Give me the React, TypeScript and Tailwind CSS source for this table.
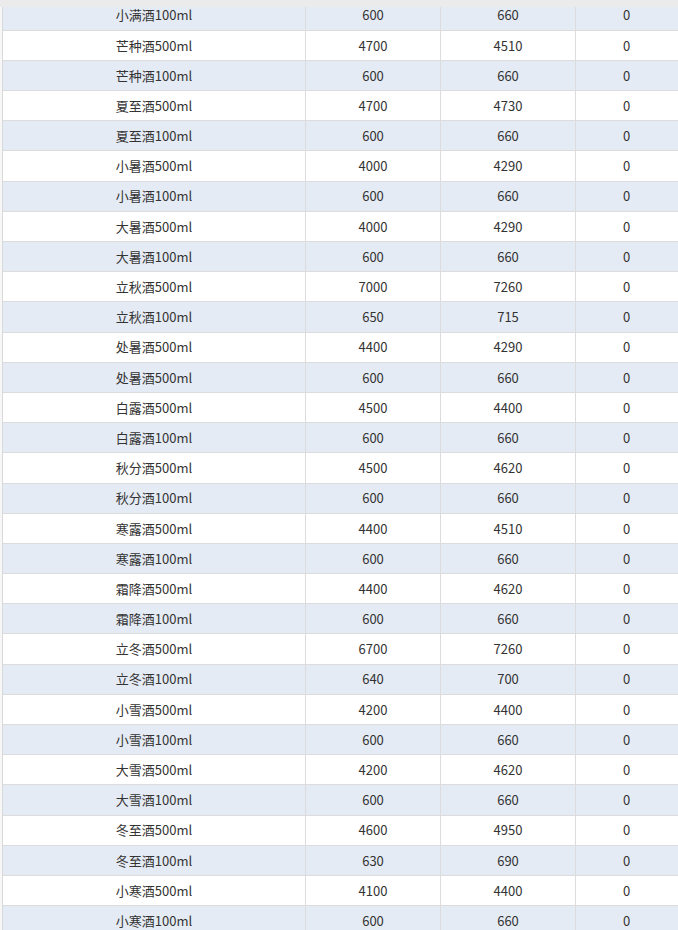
const rows: [string, string, string, string][] = [
  ["小满酒100ml", "600", "660", "0"],
  ["芒种酒500ml", "4700", "4510", "0"],
  ["芒种酒100ml", "600", "660", "0"],
  ["夏至酒500ml", "4700", "4730", "0"],
  ["夏至酒100ml", "600", "660", "0"],
  ["小暑酒500ml", "4000", "4290", "0"],
  ["小暑酒100ml", "600", "660", "0"],
  ["大暑酒500ml", "4000", "4290", "0"],
  ["大暑酒100ml", "600", "660", "0"],
  ["立秋酒500ml", "7000", "7260", "0"],
  ["立秋酒100ml", "650", "715", "0"],
  ["处暑酒500ml", "4400", "4290", "0"],
  ["处暑酒500ml", "600", "660", "0"],
  ["白露酒500ml", "4500", "4400", "0"],
  ["白露酒100ml", "600", "660", "0"],
  ["秋分酒500ml", "4500", "4620", "0"],
  ["秋分酒100ml", "600", "660", "0"],
  ["寒露酒500ml", "4400", "4510", "0"],
  ["寒露酒100ml", "600", "660", "0"],
  ["霜降酒500ml", "4400", "4620", "0"],
  ["霜降酒100ml", "600", "660", "0"],
  ["立冬酒500ml", "6700", "7260", "0"],
  ["立冬酒100ml", "640", "700", "0"],
  ["小雪酒500ml", "4200", "4400", "0"],
  ["小雪酒100ml", "600", "660", "0"],
  ["大雪酒500ml", "4200", "4620", "0"],
  ["大雪酒100ml", "600", "660", "0"],
  ["冬至酒500ml", "4600", "4950", "0"],
  ["冬至酒100ml", "630", "690", "0"],
  ["小寒酒500ml", "4100", "4400", "0"],
  ["小寒酒100ml", "600", "660", "0"],
];

export default function App() {
  return (
    <div
      className="w-[678px] h-[930px] overflow-hidden bg-[#f7f7f7] text-[13px] text-[#333]"
      style={{ fontFamily: '"Microsoft YaHei", "Noto Sans CJK SC", "Noto Sans", sans-serif' }}
    >
      {/* top strip */}
      <div className="h-[7px] bg-[#ebebeb] relative z-10" />
      <div className="pl-[2px] -mt-[6.5px]">
        <div className="border-l border-[#d9d9d9] bg-white">
          {rows.map((r, i) => (
            <div
              key={i}
              className={`grid grid-cols-[303px_135px_135px_140px] h-[30.2px] border-b border-[#dcdcdc] ${
                i % 2 === 0 ? "bg-[#e5ebf5]" : "bg-white"
              }`}
            >
              <div className="flex items-center justify-center border-r border-[#dcdcdc]">{r[0]}</div>
              <div className="flex items-center justify-center border-r border-[#dcdcdc]">{r[1]}</div>
              <div className="flex items-center justify-center border-r border-[#dcdcdc]">{r[2]}</div>
              <div className="flex items-center justify-start pl-[47px]">{r[3]}</div>
            </div>
          ))}
        </div>
      </div>
    </div>
  );
}
